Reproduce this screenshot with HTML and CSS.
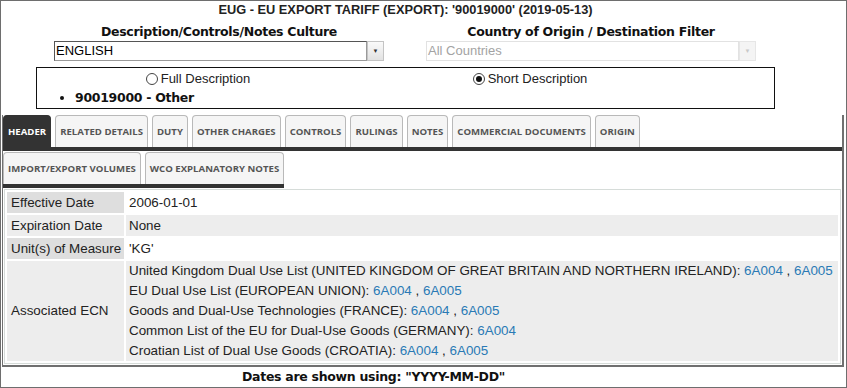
FILE: index.html
```html
<!DOCTYPE html>
<html lang="en">
<head>
  <meta charset="UTF-8" />
  <meta name="viewport" content="width=device-width, initial-scale=1.0"/>
  <title>EUG - EU Export Tariff</title>
  <link rel="stylesheet" href="styles.css">
</head>
<body>

<div class="page">
  <div class="title">EUG - EU EXPORT TARIFF (EXPORT): '90019000' (2019-05-13)</div>

  <div class="filters">
    <div class="filter">
      <div class="filter-label">Description/Controls/Notes Culture</div>
      <div class="select">
        <span class="select-text">ENGLISH</span>
        <span class="select-btn">&#9660;</span>
      </div>
    </div>
    <div class="filter">
      <div class="filter-label">Country of Origin / Destination Filter</div>
      <div class="select disabled">
        <span class="select-text">All Countries</span>
        <span class="select-btn">&#9660;</span>
      </div>
    </div>
  </div>

  <div class="desc-box">
    <div class="desc-options">
      <label class="opt"><span class="radio"></span>Full Description</label>
      <label class="opt"><span class="radio checked"></span>Short Description</label>
    </div>
    <ul class="desc-list">
      <li>90019000 - Other</li>
    </ul>
  </div>

  <div class="panel">
    <ul class="tabs">
      <li class="tab active">HEADER</li>
      <li class="tab">RELATED DETAILS</li>
      <li class="tab">DUTY</li>
      <li class="tab">OTHER CHARGES</li>
      <li class="tab">CONTROLS</li>
      <li class="tab">RULINGS</li>
      <li class="tab">NOTES</li>
      <li class="tab">COMMERCIAL DOCUMENTS</li>
      <li class="tab">ORIGIN</li>
    </ul>
    <ul class="tabs tabs-wrap">
      <li class="tab">IMPORT/EXPORT VOLUMES</li>
      <li class="tab">WCO EXPLANATORY NOTES</li>
    </ul>

    <table class="details">
      <tr>
        <td class="label">Effective Date</td>
        <td>2006-01-01</td>
      </tr>
      <tr class="alt">
        <td class="label">Expiration Date</td>
        <td>None</td>
      </tr>
      <tr>
        <td class="label">Unit(s) of Measure</td>
        <td>'KG'</td>
      </tr>
      <tr class="alt ecn">
        <td class="label">Associated ECN</td>
        <td>
          <div>United Kingdom Dual Use List (UNITED KINGDOM OF GREAT BRITAIN AND NORTHERN IRELAND): <a href="#">6A004</a> , <a href="#">6A005</a></div>
          <div>EU Dual Use List (EUROPEAN UNION): <a href="#">6A004</a> , <a href="#">6A005</a></div>
          <div>Goods and Dual-Use Technologies (FRANCE): <a href="#">6A004</a> , <a href="#">6A005</a></div>
          <div>Common List of the EU for Dual-Use Goods (GERMANY): <a href="#">6A004</a></div>
          <div>Croatian List of Dual Use Goods (CROATIA): <a href="#">6A004</a> , <a href="#">6A005</a></div>
        </td>
      </tr>
    </table>
  </div>

  <div class="footer">Dates are shown using: "YYYY-MM-DD"</div>
</div>

</body>
</html>
```

FILE: styles.css
```css
* {
  box-sizing: border-box;
}

body {
  margin: 0;
  padding: 0;
  font-family: "Liberation Sans", Arial, sans-serif;
  font-size: 13px;
  color: #222;
  background-color: #fff;
}

.page {
  width: 847px;
  height: 388px;
  border: 1px solid #6e6e6e;
  overflow: hidden;
}

.title {
  text-align: center;
  font-weight: bold;
  font-size: 12.8px;
  line-height: 16px;
  padding: 1px 36px 0 0;
}

/* culture / country filters */
.filters {
  display: grid;
  grid-template-columns: 372px 372px;
  padding-left: 32px;
  margin-top: 6px;
}

.filter {
  display: flex;
  flex-direction: column;
  align-items: center;
}

.filter-label,
.desc-list,
.footer {
  font-family: "DejaVu Sans", Verdana, sans-serif;
  font-weight: bold;
  font-size: 12.5px;
  letter-spacing: -0.3px;
}

.filter-label {
  line-height: 16px;
  color: #111;
}

.select {
  display: flex;
  width: 330px;
  height: 20px;
  margin-top: 1px;
}

.select-text {
  flex: 1;
  border: 1px solid #9a9a9a;
  border-top-color: #555;
  border-left-color: #555;
  line-height: 18px;
  padding-left: 1px;
  color: #000;
}

.select-btn {
  width: 17px;
  border: 1px solid #c4c4c4;
  background: linear-gradient(#fafafa, #e2e2e2);
  font-size: 6px;
  color: #333;
  text-align: center;
  line-height: 18px;
}

.select.disabled .select-text {
  border-color: #e2e2e2;
  color: #a3a3a3;
}

.select.disabled .select-btn {
  border-color: #e6e6e6;
  background: #f4f4f4;
  color: #c8c8c8;
}

/* description box */
.desc-box {
  width: 739px;
  height: 42px;
  margin: 6px 0 0 35px;
  border: 1px solid #111;
}

.desc-options {
  display: grid;
  grid-template-columns: 322px 342px;
  line-height: 18px;
  padding-top: 2px;
}

.opt {
  display: flex;
  justify-content: center;
  align-items: center;
  gap: 3px;
  color: #222;
}

.radio {
  width: 12px;
  height: 12px;
  border: 1px solid #444;
  border-radius: 50%;
  display: flex;
  align-items: center;
  justify-content: center;
}

.radio.checked::after {
  content: "";
  width: 6px;
  height: 6px;
  border-radius: 50%;
  background: #111;
}

.desc-list {
  margin: 1px 0 0;
  padding-left: 38px;
  line-height: 18px;
  color: #111;
}

/* tab panel */
.panel {
  margin: 6px 2px 0 1px;
  border: 2px solid #707070;
  border-top: none;
  border-left-width: 1px;
}

.tabs {
  display: flex;
  gap: 4px;
  list-style: none;
  margin: 0;
  padding: 0;
  border-bottom: 4px solid #333;
}

.tabs-wrap {
  display: inline-flex;
  margin-top: 1px;
}

.tab {
  height: 32px;
  padding: 0 4px;
  display: flex;
  align-items: center;
  border: 1px solid #b9b9b9;
  border-bottom: none;
  border-radius: 4px 4px 0 0;
  background: #f5f5f5;
  font-family: "Open Sans", sans-serif;
  font-weight: bold;
  font-size: 9.6px;
  color: #555;
  white-space: nowrap;
}

.tab.active {
  background: #333;
  border-color: #333;
  color: #fff;
}

.details {
  width: 837px;
  margin: 1px 0 1px 1px;
  border: 1px solid #d6dcd9;
  border-spacing: 2px;
  background: #fff;
  font-size: 13.4px;
}

.details td {
  padding: 1px 1px 0 3px;
  line-height: 20px;
  background: #fff;
  vertical-align: middle;
  white-space: nowrap;
}

.details tr.ecn td {
  padding-top: 0;
}

.details tr.alt td {
  background: #ededed;
}

.details td.label {
  width: 117px;
  padding-left: 4px;
  background: #dedede;
}

.details a {
  color: #2a7ab5;
  text-decoration: none;
}

.footer {
  text-align: center;
  line-height: 20px;
  padding-right: 100px;
  color: #111;
}
```
